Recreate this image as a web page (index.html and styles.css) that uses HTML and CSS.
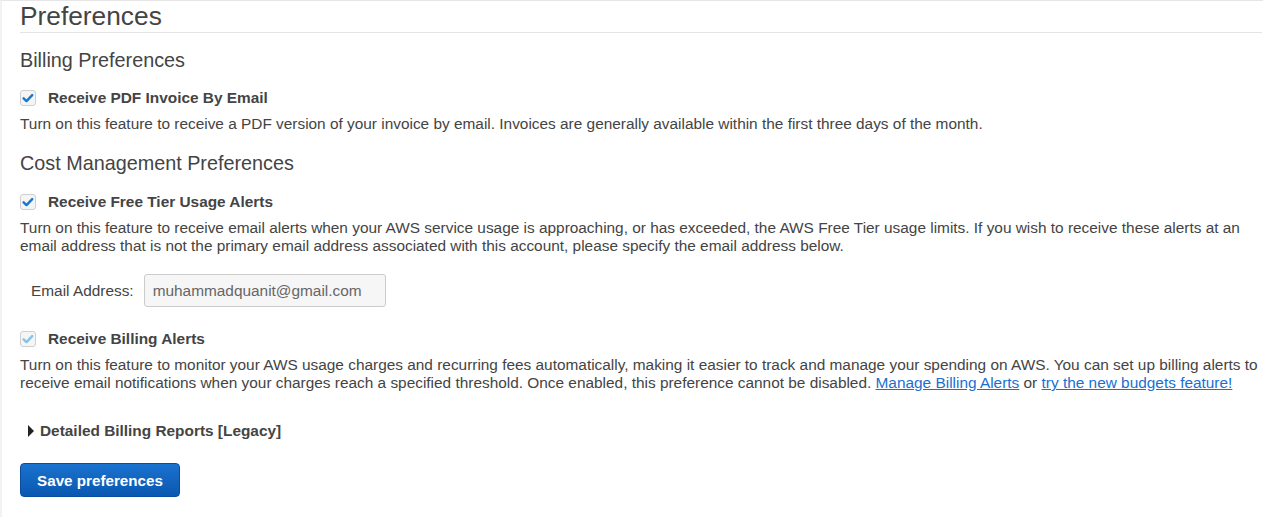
FILE: index.html
```html
<!DOCTYPE html>
<html>
<head>
<meta charset="utf-8">
<link rel="stylesheet" href="styles.css">
</head>
<body>
<div class="page">
  <h1 class="title">Preferences</h1>

  <h2 class="section">Billing Preferences</h2>
  <label class="check-row"><span class="box"><svg viewBox="0 0 16 16" width="14" height="14"><path d="M3 8.3l3.3 3.2 6.5-6.8" fill="none" stroke="#1a78cc" stroke-width="2.8" stroke-linecap="round" stroke-linejoin="round"/></svg></span><span class="check-label">Receive PDF Invoice By Email</span></label>
  <p class="desc">Turn on this feature to receive a PDF version of your invoice by email. Invoices are generally available within the first three days of the month.</p>

  <h2 class="section section-next">Cost Management Preferences</h2>
  <label class="check-row check-after-next"><span class="box"><svg viewBox="0 0 16 16" width="14" height="14"><path d="M3 8.3l3.3 3.2 6.5-6.8" fill="none" stroke="#1a78cc" stroke-width="2.8" stroke-linecap="round" stroke-linejoin="round"/></svg></span><span class="check-label">Receive Free Tier Usage Alerts</span></label>
  <p class="desc">Turn on this feature to receive email alerts when your AWS service usage is approaching, or has exceeded, the AWS Free Tier usage limits. If you wish to receive these alerts at an email address that is not the primary email address associated with this account, please specify the email address below.</p>

  <div class="email-row">
    <span class="email-label">Email Address:</span>
    <span class="email-input">muhammadquanit@gmail.com</span>
  </div>

  <label class="check-row disabled"><span class="box"><svg viewBox="0 0 16 16" width="14" height="14"><path d="M3 8.3l3.3 3.2 6.5-6.8" fill="none" stroke="#86c3ea" stroke-width="2.8" stroke-linecap="round" stroke-linejoin="round"/></svg></span><span class="check-label">Receive Billing Alerts</span></label>
  <p class="desc">Turn on this feature to monitor your AWS usage charges and recurring fees automatically, making it easier to track and manage your spending on AWS. You can set up billing alerts to receive email notifications when your charges reach a specified threshold. Once enabled, this preference cannot be disabled. <a href="#">Manage Billing Alerts</a> or <a href="#">try the new budgets feature!</a></p>

  <div class="expander"><span class="caret"></span><span class="expander-label">Detailed Billing Reports [Legacy]</span></div>

  <button class="save">Save preferences</button>
</div>
</body>
</html>
```

FILE: styles.css
```css
html, body {
  margin: 0;
  padding: 0;
  background: #fff;
}
body {
  font-family: "Liberation Sans", Arial, sans-serif;
  color: #444;
  border-top: 1px solid #e6e6e6;
  border-left: 2px solid #f2f2f2;
  min-height: 517px;
  box-sizing: border-box;
}
.page {
  padding: 0 1px 0 18px;
}
.title {
  margin: 0;
  font-size: 26.3px;
  font-weight: normal;
  line-height: 30px;
  padding-bottom: 1px;
  border-bottom: 1px solid #e4e4e4;
  color: #444;
}
.section {
  margin: 14px 0 0 0;
  font-size: 19.8px;
  font-weight: normal;
  line-height: 26px;
  color: #444;
}
.section-next {
  margin-top: 17px;
}
.check-row {
  display: flex;
  align-items: center;
  gap: 12px;
  margin-top: 16px;
  height: 18px;
}
.check-after-next {
  margin-top: 17px;
}
.box {
  width: 14px;
  height: 14px;
  border: 1px solid #cfcfcf;
  border-radius: 3px;
  background: #f5f5f5;
  display: flex;
  align-items: center;
  justify-content: center;
  box-sizing: content-box;
}
.box svg {
  display: block;
}
.check-label {
  font-weight: bold;
  font-size: 15.4px;
}
.desc {
  margin: 8px 0 0 0;
  font-size: 15.4px;
  line-height: 18px;
}
.desc a {
  color: #1a6fd0;
}
.email-row {
  display: flex;
  align-items: center;
  gap: 10px;
  margin-top: 19px;
  padding-left: 11px;
}
.email-label {
  font-size: 15.4px;
}
.email-input {
  width: 224px;
  height: 31px;
  line-height: 31px;
  border: 1px solid #ccc;
  border-radius: 3px;
  background: #f6f6f6;
  padding: 0 8px;
  font-size: 15.4px;
  color: #666;
}
.check-row.disabled {
  margin-top: 23px;
}
.expander {
  display: flex;
  align-items: center;
  gap: 6px;
  margin-top: 30px;
  padding-left: 8px;
  font-weight: bold;
  font-size: 15.4px;
}
.caret {
  width: 0;
  height: 0;
  border-top: 6px solid transparent;
  border-bottom: 6px solid transparent;
  border-left: 6px solid #222;
}
.save {
  display: block;
  margin-top: 23px;
  width: 160px;
  height: 34px;
  border: 1px solid #0a4d9e;
  border-radius: 4px;
  background: linear-gradient(#1a72cf, #0a58b0);
  color: #fff;
  font-family: "Liberation Sans", Arial, sans-serif;
  font-weight: bold;
  font-size: 15.2px;
  cursor: pointer;
}
```
